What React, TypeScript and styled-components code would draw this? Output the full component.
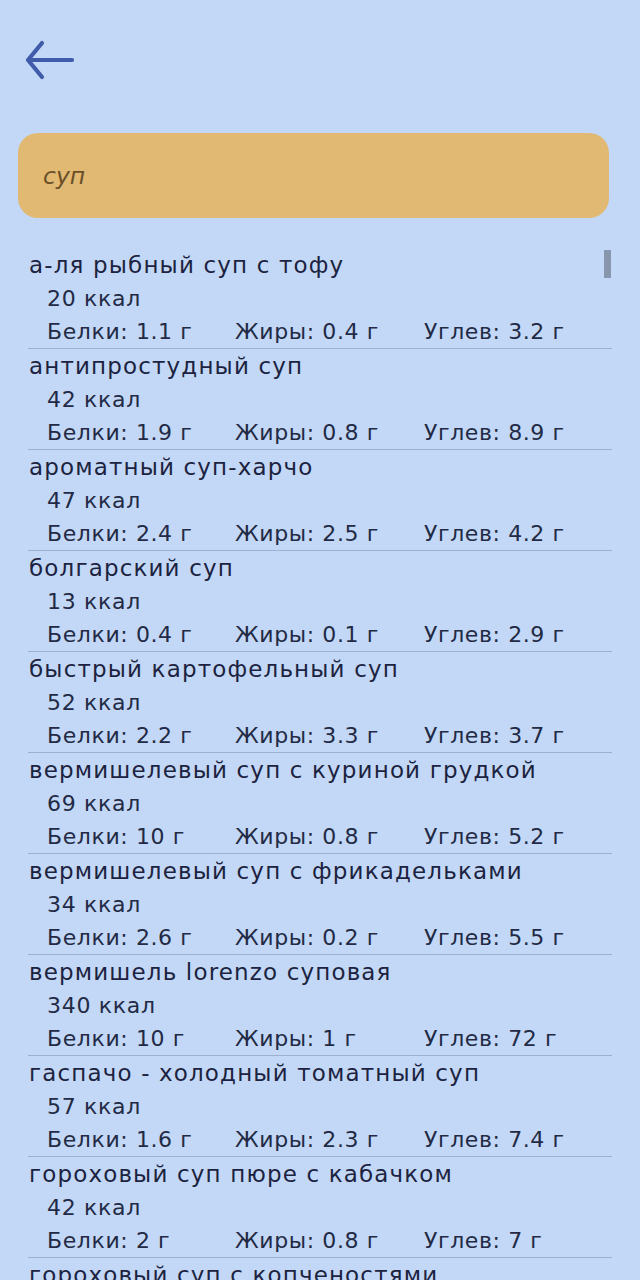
import React from "react";
import styled, { createGlobalStyle } from "styled-components";

const Global = createGlobalStyle`
  html, body { margin: 0; padding: 0; background: #c3d8f6; overflow: hidden; }
  body { font-family: "DejaVu Sans", "Noto Sans", sans-serif; color: #1c2340; }
`;

const Page = styled.div`
  width: 640px;
  height: 1280px;
  background: #c3d8f6;
  display: flex;
  flex-direction: column;
  overflow: hidden;
`;

const Header = styled.div`
  height: 120px;
  display: flex;
  align-items: center;
  padding: 0 0 0 24px;
  box-sizing: border-box;
`;

const BackButton = styled.button`
  border: 0;
  background: transparent;
  padding: 0;
  width: 54px;
  height: 44px;
  display: flex;
  align-items: center;
  cursor: pointer;
`;

const Search = styled.div`
  margin: 13px 31px 0 18px;
  height: 85px;
  border-radius: 20px;
  background: #e1b972;
  display: flex;
  align-items: center;
  padding-left: 25px;
  box-sizing: border-box;
  font-style: italic;
  font-size: 23.5px;
  color: #6a4f28;
`;

const ListArea = styled.div`
  position: relative;
  flex: 1;
  margin-top: 30px;
  overflow: hidden;
`;

const Thumb = styled.div`
  position: absolute;
  right: 29px;
  top: 2px;
  width: 7px;
  height: 28px;
  background: #8796ad;
`;

const Row = styled.div`
  margin: 0 28px 0 28px;
  height: 100px;
  border-bottom: 1.5px solid #9db1cf;
  display: flex;
  flex-direction: column;
`;

const Title = styled.div`
  height: 34px;
  line-height: 34px;
  font-size: 23px;
  letter-spacing: 1.15px;
  padding-left: 1px;
  white-space: nowrap;
`;

const Kcal = styled.div`
  height: 33px;
  line-height: 33px;
  font-size: 22px;
  letter-spacing: 0.7px;
  padding-left: 19px;
  color: #222a45;
`;

const Macros = styled.div`
  height: 33px;
  line-height: 33px;
  font-size: 22px;
  letter-spacing: 0.6px;
  padding-left: 19px;
  display: grid;
  grid-template-columns: 188px 189px 1fr;
  color: #222a45;
  white-space: nowrap;
`;

type Item = { name: string; kcal: string; p: string; f: string; c: string };

const items: Item[] = [
  { name: "а-ля рыбный суп с тофу", kcal: "20", p: "1.1", f: "0.4", c: "3.2" },
  { name: "антипростудный суп", kcal: "42", p: "1.9", f: "0.8", c: "8.9" },
  { name: "ароматный суп-харчо", kcal: "47", p: "2.4", f: "2.5", c: "4.2" },
  { name: "болгарский суп", kcal: "13", p: "0.4", f: "0.1", c: "2.9" },
  { name: "быстрый картофельный суп", kcal: "52", p: "2.2", f: "3.3", c: "3.7" },
  { name: "вермишелевый суп с куриной грудкой", kcal: "69", p: "10", f: "0.8", c: "5.2" },
  { name: "вермишелевый суп с фрикадельками", kcal: "34", p: "2.6", f: "0.2", c: "5.5" },
  { name: "вермишель lorenzo суповая", kcal: "340", p: "10", f: "1", c: "72" },
  { name: "гаспачо - холодный томатный суп", kcal: "57", p: "1.6", f: "2.3", c: "7.4" },
  { name: "гороховый суп пюре с кабачком", kcal: "42", p: "2", f: "0.8", c: "7" },
  { name: "гороховый суп с копченостями", kcal: "61", p: "3.4", f: "2.1", c: "7.2" },
];

const BackIcon = () => (
  <svg width="52" height="44" viewBox="0 0 52 44" fill="none">
    <path
      d="M4 22 H48 M4 22 L18 5 M4 22 L18 39"
      stroke="#3f5ba9"
      strokeWidth="4.2"
      strokeLinecap="round"
      strokeLinejoin="round"
    />
  </svg>
);

export default function App() {
  return (
    <Page>
      <Global />
      <Header>
        <BackButton aria-label="Назад">
          <BackIcon />
        </BackButton>
      </Header>
      <Search>суп</Search>
      <ListArea>
        {items.map((it, i) => (
          <Row key={i}>
            <Title>{it.name}</Title>
            <Kcal>{it.kcal} ккал</Kcal>
            <Macros>
              <span>Белки: {it.p} г</span>
              <span>Жиры: {it.f} г</span>
              <span>Углев: {it.c} г</span>
            </Macros>
          </Row>
        ))}
        <Thumb />
      </ListArea>
    </Page>
  );
}
